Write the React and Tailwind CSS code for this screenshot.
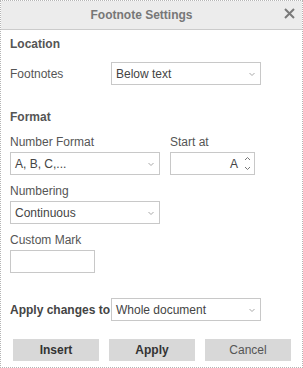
import { useState } from "react";

function Chevron() {
  return (
    <svg width="6" height="4" viewBox="0 0 6 4" className="shrink-0">
      <path d="M0.5 1 L3 3.5 L5.5 1" fill="none" stroke="#a8a8a8" strokeWidth="1" />
    </svg>
  );
}

function Select({ value, className = "" }) {
  return (
    <div
      className={`flex h-[23px] items-center justify-between border border-[#c8c8c8] bg-white pl-[4px] pr-[5px] text-[12px] text-[#444] ${className}`}
    >
      <span>{value}</span>
      <Chevron />
    </div>
  );
}

function Label({ children, className = "" }) {
  return <div className={`h-[14px] leading-[14px] text-[12px] text-[#555] ${className}`}>{children}</div>;
}

export default function App() {
  const [start] = useState("A");

  return (
    <div
      className="flex h-[368px] w-[303px] flex-col border border-dotted border-[#b5b5b5] bg-white"
      style={{ fontFamily: '"Liberation Sans", Arial, sans-serif' }}
    >
      <div className="relative flex h-[29px] shrink-0 items-center justify-center border-b border-[#cbcbcb] bg-[#ececec] pr-[20px]">
        <span className="text-[12px] font-bold text-[#777]">Footnote Settings</span>
        <svg width="11" height="11" viewBox="0 0 11 11" className="absolute right-[7px] top-[7px]">
          <path d="M1 1 L10 10 M10 1 L1 10" stroke="#7a7a7a" strokeWidth="2" />
        </svg>
      </div>

      <div className="flex flex-col px-[9px]">
        <Label className="mt-[7px] font-bold text-[#444]">Location</Label>
        <div className="mt-[11px] flex items-center">
          <span className="w-[101px] text-[12px] text-[#555]">Footnotes</span>
          <Select value="Below text" className="w-[150px]" />
        </div>

        <Label className="mt-[25px] font-bold text-[#444]">Format</Label>
        <div className="mt-[11px] flex gap-[10px]">
          <div className="flex w-[150px] flex-col">
            <Label>Number Format</Label>
            <Select value="A, B, C,..." className="mt-[3px]" />
          </div>
          <div className="flex w-[85px] flex-col">
            <Label>Start at</Label>
            <div className="mt-[3px] flex h-[23px] items-center justify-end border border-[#c8c8c8] bg-white pr-[3px] text-[12px] text-[#444]">
              <span className="mr-[6px]">{start}</span>
              <svg width="7" height="17" viewBox="0 0 7 17">
                <path d="M1 5 L3.5 2.5 L6 5" fill="none" stroke="#777" strokeWidth="1" />
                <path d="M1 12 L3.5 14.5 L6 12" fill="none" stroke="#777" strokeWidth="1" />
              </svg>
            </div>
          </div>
        </div>

        <Label className="mt-[9px]">Numbering</Label>
        <Select value="Continuous" className="mt-[3px] w-[150px]" />

        <Label className="mt-[9px]">Custom Mark</Label>
        <div className="mt-[3px] h-[23px] w-[85px] border border-[#c8c8c8] bg-white" />

        <div className="mt-[25px] flex items-center">
          <span className="w-[101px] text-[12px] font-bold text-[#444]">Apply changes to</span>
          <Select value="Whole document" className="w-[150px]" />
        </div>

        <div className="mt-[18px] flex gap-[10px] pl-[3px]">
          <button className="h-[22px] w-[86px] bg-[#d8d8d8] text-[12px] font-bold text-[#333]">Insert</button>
          <button className="h-[22px] w-[86px] bg-[#d8d8d8] text-[12px] font-bold text-[#333]">Apply</button>
          <button className="h-[22px] w-[86px] bg-[#d8d8d8] text-[12px] text-[#555]">Cancel</button>
        </div>
      </div>
    </div>
  );
}
